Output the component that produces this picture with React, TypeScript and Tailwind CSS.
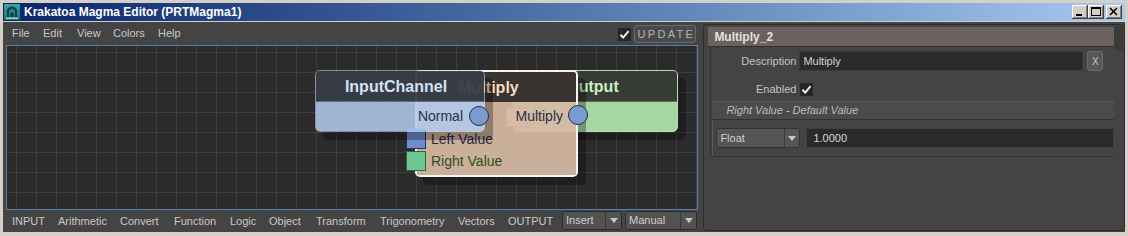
import React from "react";

const Check = ({ className = "" }: { className?: string }) => (
  <svg viewBox="0 0 13 13" className={className}>
    <path d="M2.5 6.8 L5.2 9.6 L10.6 3.2" fill="none" stroke="#f2f2f2" strokeWidth="2" />
  </svg>
);

const Arrow = () => (
  <svg viewBox="0 0 8 5" className="w-[8px] h-[5px]">
    <path d="M0 0 H8 L4 5 Z" fill="#c8c8c8" />
  </svg>
);

const WinBtn = ({ children }: { children: React.ReactNode }) => (
  <div className="w-[16px] h-[14px] bg-[#d4d0c8] flex items-center justify-center shadow-[inset_-1px_-1px_#404040,inset_1px_1px_#ffffff,inset_-2px_-2px_#808080,inset_2px_2px_#d4d0c8]">
    {children}
  </div>
);

export default function App() {
  const menu: [string, number][] = [
    ["File", 31],
    ["Edit", 34],
    ["View", 36],
    ["Colors", 45],
    ["Help", 40],
  ];
  const tools: [string, number][] = [
    ["INPUT", 46],
    ["Arithmetic", 62],
    ["Convert", 54],
    ["Function", 56],
    ["Logic", 39],
    ["Object", 47],
    ["Transform", 64],
    ["Trigonometry", 78],
    ["Vectors", 50],
    ["OUTPUT", 54],
  ];
  return (
    <div className="w-[1128px] h-[236px] bg-[#d4d0c8] pt-[3px] px-[3px] pb-[4px] flex flex-col font-['Liberation_Sans',Arial,sans-serif] overflow-hidden">
      {/* Title bar */}
      <div className="h-[18px] mb-[1px] bg-gradient-to-r from-[#0a246a] to-[#a6caf0] flex items-center pl-[1px] pr-[3px]">
        <svg viewBox="0 0 16 16" className="w-[16px] h-[16px]">
          <defs>
            <linearGradient id="ig" x1="0" y1="0" x2="0" y2="1">
              <stop offset="0" stopColor="#3aa6a0" />
              <stop offset="1" stopColor="#1d6e70" />
            </linearGradient>
          </defs>
          <rect x="0" y="0" width="16" height="16" fill="url(#ig)" />
          <path d="M3 13 V7 Q3 3 8 2.5 Q13 3 13 7 V13 H11 V8 Q11 5.5 8 5 Q5 5.5 5 8 V13 Z" fill="#0f3f44" />
          <path d="M6.5 13 V9 Q8 7.5 9.5 9 V13 Z" fill="#0f3f44" />
          <rect x="2" y="13.5" width="12" height="1.5" fill="#9fd8d0" />
        </svg>
        <span className="ml-[4px] text-white font-bold text-[12px] leading-none">
          Krakatoa Magma Editor (PRTMagma1)
        </span>
        <div className="ml-auto flex items-center">
          <WinBtn>
            <svg viewBox="0 0 16 14" className="w-[16px] h-[14px]">
              <rect x="4" y="9" width="6" height="2" fill="#000" />
            </svg>
          </WinBtn>
          <WinBtn>
            <svg viewBox="0 0 16 14" className="w-[16px] h-[14px]">
              <rect x="3.5" y="2.5" width="9" height="8" fill="none" stroke="#000" />
              <rect x="3" y="2" width="10" height="2" fill="#000" />
            </svg>
          </WinBtn>
          <div className="w-[2px]" />
          <WinBtn>
            <svg viewBox="0 0 16 14" className="w-[16px] h-[14px]">
              <path d="M4 3 L11 10 M11 3 L4 10" stroke="#000" strokeWidth="1.6" />
            </svg>
          </WinBtn>
        </div>
      </div>

      {/* Content */}
      <div className="flex-1 bg-[#444444] flex text-[11px] text-[#c8c8c8]">
        {/* Left side */}
        <div className="w-[698px] flex flex-col">
          <div className="h-[23px] flex items-start pl-[9px]">
            <div className="flex items-center h-[22px] pt-[1px]">
              {menu.map(([m, w]) => (
                <span key={m} style={{ width: w }} className="shrink-0">
                  {m}
                </span>
              ))}
            </div>
            <div className="ml-auto flex items-center mt-[3px] mr-[4px]">
              <div className="w-[13px] h-[13px] bg-[#262626] rounded-[1px] flex items-center justify-center mr-[3px]">
                <Check className="w-[13px] h-[13px]" />
              </div>
              <div className="w-[62px] h-[18px] bg-[#4a4a4a] border border-[#6a6a6a] rounded-[3px] flex items-center justify-center text-[#b4b4b4] tracking-[2.3px] pl-[2px]">
                UPDATE
              </div>
            </div>
          </div>

          {/* Canvas */}
          <div className="ml-[3px] w-[692px] h-[165px] border border-[#5b7fa3] bg-[#2b2b2b] bg-[linear-gradient(to_right,#3e3e3e_1px,transparent_1px),linear-gradient(to_bottom,#3e3e3e_1px,transparent_1px)] bg-[length:20px_20px] bg-[position:9px_6px] relative overflow-hidden">
            {/* Output node */}
            <div className="absolute left-[506px] top-[24px] w-[165px] h-[62px] rounded-[5px] border border-[#b8dcb4] bg-[#a6d6a2] shadow-[8px_8px_0_rgba(0,0,0,0.3)] z-[1]">
              <div className="h-[31px] bg-[#373c37] rounded-t-[4px] border-b border-[#5a6a5a] flex items-center justify-center pr-[6px] pt-[1px] text-[16px] font-bold text-[#c8f0c0]">
                Output
              </div>
              <div className="absolute left-[-8px] top-[36px] w-[21px] h-[20px] border border-[#7a6a60] bg-[#e9d3c8]" />
            </div>

            {/* Multiply node */}
            <div className="absolute left-[408px] top-[24px] w-[163px] h-[107px] rounded-[5px] border-2 border-[#f4f4f4] shadow-[8px_8px_0_rgba(0,0,0,0.3)] z-[2]">
              <div className="absolute inset-0 rounded-[3px] bg-[rgba(214,186,164,0.93)]" />
              <div className="relative h-[30px] bg-[#3a3431] rounded-t-[3px] flex items-center justify-center pr-[16px] pt-[1px] text-[16px] font-bold text-[#f6dcc2]">
                Multiply
              </div>
              <div className="absolute right-[13px] top-[36px] h-[16px] flex items-center text-[14px] text-[#2c2c48]">
                Multiply
              </div>
              <div className="absolute left-[151px] top-[33px] w-[20px] h-[20px] rounded-full bg-[#7b9bd0] border-[1.5px] border-[#1f2b4a]" />
              <div className="absolute left-[-11px] top-[57px] w-[20px] h-[20px] bg-[#6f8ccc] border border-[#223366]" />
              <div className="absolute left-[-11px] top-[79px] w-[20px] h-[20px] bg-[#6cc790] border border-[#2b6a3c]" />
              <div className="absolute left-[14px] top-[57px] h-[20px] flex items-center text-[14px] text-[#2a2a48]">
                Left Value
              </div>
              <div className="absolute left-[14px] top-[79px] h-[20px] flex items-center text-[14px] text-[#2d4f22]">
                Right Value
              </div>
            </div>

            {/* InputChannel node */}
            <div className="absolute left-[308px] top-[24px] w-[170px] h-[62px] rounded-[5px] border border-[rgba(200,215,235,0.6)] shadow-[8px_8px_0_rgba(0,0,0,0.3)] z-[3]">
              <div className="h-[31px] bg-[rgba(56,61,70,0.95)] rounded-t-[4px] border-b border-[rgba(110,120,135,0.8)] flex items-center justify-center pr-[8px] pt-[1px] text-[16px] font-bold text-[#d2e2f6]">
                InputChannel
              </div>
              <div className="h-[29px] bg-[rgba(176,200,236,0.88)] rounded-b-[4px]" />
              <div className="absolute right-[21px] top-[37px] h-[16px] flex items-center text-[14px] text-[#2a2f4c]">
                Normal
              </div>
              <div className="absolute left-[153px] top-[35px] w-[20px] h-[20px] rounded-full bg-[#7b9bd0] border-[1.5px] border-[#1f2b4a]" />
            </div>
          </div>

          {/* Bottom toolbar */}
          <div className="h-[22px] flex items-start pl-[9px]">
            <div className="flex items-center h-[22px] pt-[1px]">
              {tools.map(([t, w]) => (
                <span key={t} style={{ width: w }} className="shrink-0">
                  {t}
                </span>
              ))}
            </div>
            <div className="flex mt-[1px]">
              <div className="w-[60px] h-[19px] bg-[#525252] border border-[#2c2c2c] rounded-[3px] flex items-center">
                <span className="flex-1 pl-[3px] text-[#cfcfcf]">Insert</span>
                <div className="w-[16px] h-full border-l border-[#3a3a3a] flex items-center justify-center">
                  <Arrow />
                </div>
              </div>
              <div className="ml-[3px] w-[72px] h-[19px] bg-[#525252] border border-[#2c2c2c] rounded-[3px] flex items-center">
                <span className="flex-1 pl-[3px] text-[#cfcfcf]">Manual</span>
                <div className="w-[16px] h-full border-l border-[#3a3a3a] flex items-center justify-center">
                  <Arrow />
                </div>
              </div>
            </div>
          </div>
        </div>

        {/* Right panel */}
        <div className="ml-[3px] mt-[2px] mb-[1px] w-[422px] border border-[#2c2c2c] rounded-[3px] bg-[#444444] flex">
          <div className="flex flex-col w-[410px]">
            <div className="ml-[4px] mt-[2px] w-[406px] h-[20px] bg-[#6b615f] flex items-center pl-[6px] text-[12px] font-bold text-[#e4e0dc] border-b border-[#2e2e2e]">
              Multiply_2
            </div>
            <div className="ml-[6px] w-[404px] h-[110px] border-l border-b border-[#333333] flex flex-col">
              <div className="flex items-center mt-[4px] h-[20px]">
                <span className="w-[85px] text-right text-[#c4c4c4]">Description</span>
                <div className="ml-[3px] w-[284px] h-[20px] bg-[#2a2a2a] border border-[#3a3a3a] rounded-[2px] flex items-center pl-[3px] text-[#d4d4d4]">
                  Multiply
                </div>
                <div className="ml-[4px] w-[16px] h-[20px] bg-[#575757] border border-[#6b6b6b] rounded-[3px] flex items-center justify-center text-[10px] text-[#c8c8c8]">
                  X
                </div>
              </div>
              <div className="flex items-center mt-[11px] h-[14px]">
                <span className="w-[85px] text-right text-[#c4c4c4]">Enabled</span>
                <div className="ml-[4px] w-[13px] h-[13px] bg-[#262626] rounded-[1px] flex items-center justify-center">
                  <Check className="w-[13px] h-[13px]" />
                </div>
              </div>
              <div className="mt-[5px] ml-[1px] h-[19px] bg-[#4b4b4b] border-t border-[#5a5a5a] border-b border-b-[#333333] flex items-center pl-[14px] italic text-[#bcbcbc]">
                Right Value - Default Value
              </div>
              <div className="ml-[1px] flex-1 border-l border-[#5a5a5a] flex items-start pt-[8px] pl-[3px]">
                <div className="w-[84px] h-[20px] bg-[#555555] border border-[#333333] rounded-[3px] flex items-center">
                  <span className="flex-1 pl-[3px] text-[#cfcfcf]">Float</span>
                  <div className="w-[15px] h-full border-l border-[#3a3a3a] flex items-center justify-center">
                    <Arrow />
                  </div>
                </div>
                <div className="ml-[6px] flex-1 h-[20px] bg-[#2a2a2a] border border-[#3e3e3e] rounded-l-[2px] flex items-center pl-[6px] text-[#d8d8d8]">
                  1.0000
                </div>
              </div>
            </div>
          </div>
          <div className="flex-1 flex flex-col">
            <div className="h-[24px] mt-[1px] mr-[1px] bg-[#3a3a3a]" />
          </div>
        </div>
      </div>
    </div>
  );
}
